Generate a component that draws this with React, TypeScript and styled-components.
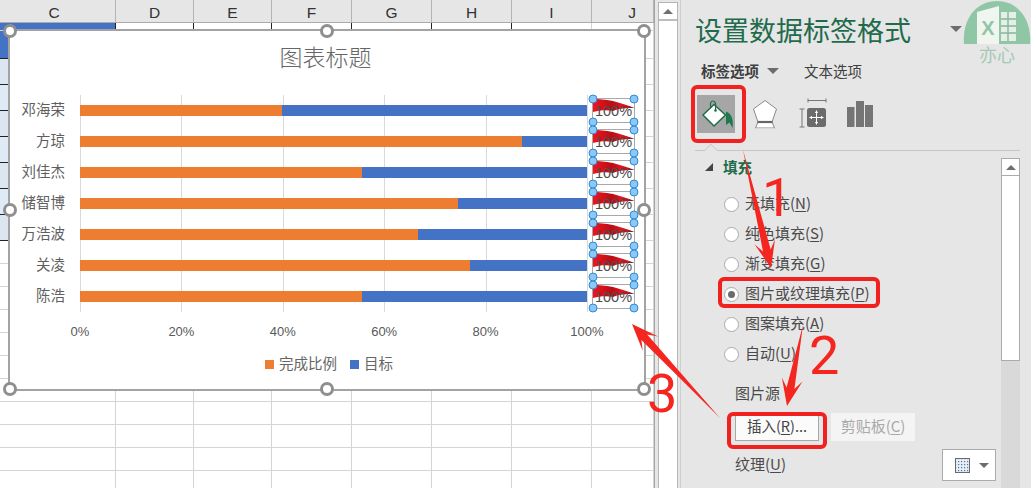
import React from "react";
import styled, { createGlobalStyle } from "styled-components";

const CJK = `"Noto Sans CJK SC", "Liberation Sans", sans-serif`;

const Global = createGlobalStyle`
  html, body { margin: 0; padding: 0; background: #e6e6e6; }
  * { box-sizing: border-box; }
  #root { width: 1031px; height: 488px; overflow: hidden; }
`;

const Window = styled.div`
  position: relative;
  display: flex;
  width: 1031px;
  height: 488px;
  overflow: hidden;
  background: #e6e6e6;
  font-family: ${CJK};
`;

/* ---------- spreadsheet ---------- */
const SheetArea = styled.div`
  position: relative;
  width: 655px;
  height: 488px;
  flex: none;
  overflow: hidden;
  background: #fff;
  border-right: 1px solid #a6a6a6;
`;
const ColumnHeader = styled.div`
  display: grid;
  grid-template-columns: 116px 78px 78px 80px 80px 80px 80px 62px;
  height: 23px;
  background: #e6e6e6;
  border-bottom: 1px solid #ababab;
`;
const ColumnName = styled.div<{ $padLeft?: number; $padRight?: number }>`
  display: flex;
  align-items: center;
  justify-content: center;
  padding-top: 3px;
  padding-left: ${(p) => p.$padLeft ?? 0}px;
  padding-right: ${(p) => p.$padRight ?? 0}px;
  border-right: 1px solid #b4b4b4;
  font: 15.5px "Liberation Sans", sans-serif;
  color: #333;
`;
const CellGrid = styled.div`
  display: grid;
  grid-template-columns: 116px 78px 78px 80px 80px 80px 80px 62px;
  grid-template-rows: 8px 28px repeat(7, 26px) repeat(11, 23px);
`;
const Cell = styled.div<{ $fill: string; $bottom: string; $right: string }>`
  background: ${(p) => p.$fill};
  border-bottom: 1px solid ${(p) => p.$bottom};
  border-right: 1px solid ${(p) => p.$right};
`;

/* ---------- chart ---------- */
const Chart = styled.div`
  position: absolute;
  left: 8px;
  top: 29px;
  width: 638px;
  height: 362px;
  display: flex;
  flex-direction: column;
  background: #fff;
  border: 2px solid #a3a3a3;
  color: #595959;
`;
const ChartTitle = styled.div`
  height: 50px;
  margin-bottom: 14px;
  padding-right: 3px;
  display: flex;
  align-items: center;
  justify-content: center;
  font-size: 23px;
  font-weight: 300;
  color: #666;
`;
const PlotRow = styled.div`
  display: flex;
  height: 31px;
`;
const CategoryName = styled.div`
  width: 55px;
  margin-right: 15px;
  text-align: right;
  font-size: 14.5px;
  line-height: 27px;
  white-space: nowrap;
  color: #5f5f5f;
`;
const Track = styled.div`
  width: 508px;
  display: flex;
  align-items: center;
  background: repeating-linear-gradient(to right, #d9d9d9 0 1px, transparent 1px 101.4px);
`;
const BarPair = styled.div`
  display: flex;
  width: 507px;
  height: 11px;
`;
const OrangeBar = styled.div`
  background: #ed7d31;
`;
const BlueBar = styled.div`
  flex: 1;
  background: #4472c4;
`;
const DataLabel = styled.div`
  position: relative;
  width: 43px;
  height: 25px;
  margin: 3px 0 0 4px;
  display: flex;
  align-items: center;
  justify-content: center;
  border: 1px solid #a9a9a9;
  font: 14.5px "Liberation Sans", sans-serif;
  color: #4d4d4d;
`;
const FlagArt = styled.svg`
  position: absolute;
  left: 0;
  top: -1px;
  width: 42px;
  height: 14px;
`;
const LabelText = styled.span`
  position: relative;
`;
const LabelHandle = styled.i<{ $x: number; $y: number }>`
  position: absolute;
  left: ${(p) => p.$x}%;
  top: ${(p) => p.$y}%;
  width: 9px;
  height: 9px;
  transform: translate(-50%, -50%);
  border-radius: 50%;
  background: #8cc8f5;
  border: 1px solid #2f8ad6;
`;
const AxisRow = styled.div`
  width: 507px;
  height: 38px;
  margin-left: 70px;
  display: flex;
  justify-content: space-between;
  align-items: center;
`;
const AxisTick = styled.div`
  width: 0;
  display: flex;
  justify-content: center;
  white-space: nowrap;
  font: 13px "Liberation Sans", sans-serif;
  color: #595959;
`;
const Legend = styled.div`
  height: 24px;
  padding-left: 4px;
  display: flex;
  align-items: center;
  justify-content: center;
  font-size: 14.5px;
  color: #666;
`;
const LegendItem = styled.div`
  display: flex;
  align-items: center;
  gap: 5px;
  margin: 0 6.5px;
`;
const Swatch = styled.i<{ $color: string }>`
  width: 9px;
  height: 9px;
  margin-top: 4px;
  background: ${(p) => p.$color};
`;
const ChartHandle = styled.i<{ $x: number; $y: number }>`
  position: absolute;
  left: ${(p) => p.$x}%;
  top: ${(p) => p.$y}%;
  width: 14px;
  height: 14px;
  transform: translate(-50%, -50%);
  border-radius: 50%;
  background: #fff;
  border: 3px solid #8f8f8f;
`;

/* ---------- sheet scrollbar ---------- */
const SheetScroll = styled.div`
  width: 20px;
  height: 488px;
  margin: 2px 0 0 3px;
  flex: none;
  background: #fff;
  border-left: 1px solid #b5b5b5;
  border-right: 1px solid #b5b5b5;
`;
const ScrollCap = styled.div`
  height: 19px;
  display: flex;
  align-items: center;
  justify-content: center;
  border-top: 1px solid #b5b5b5;
  border-bottom: 2px solid #bdbdbd;
`;
const ArrowUp = styled.i`
  width: 0;
  height: 0;
  border-left: 5px solid transparent;
  border-right: 5px solid transparent;
  border-bottom: 5px solid #6f6f6f;
`;

/* ---------- format panel ---------- */
const Panel = styled.div`
  position: relative;
  margin-left: 2px;
  flex: 1;
  height: 488px;
  display: flex;
  flex-direction: column;
  border-left: 1px solid #cfcfcf;
  color: #444;
`;
const TitleRow = styled.div`
  height: 60px;
  padding: 0 0 2px 14px;
  display: flex;
  align-items: center;
`;
const PanelTitle = styled.div`
  font-size: 27px;
  color: #1f6b4b;
  white-space: nowrap;
`;
const DownCaret = styled.i<{ $size: number; $left: number }>`
  width: 0;
  height: 0;
  margin-left: ${(p) => p.$left}px;
  border-left: ${(p) => p.$size}px solid transparent;
  border-right: ${(p) => p.$size}px solid transparent;
  border-top: ${(p) => p.$size}px solid #6c6c6c;
`;
const TabRow = styled.div`
  height: 23px;
  padding: 0 0 2px 20px;
  display: flex;
  align-items: center;
`;
const Tab = styled.span<{ $active?: boolean }>`
  font-size: 14.5px;
  font-weight: ${(p) => (p.$active ? 700 : 400)};
  color: #3f3f3f;
  white-space: nowrap;
`;
const TabGap = styled.span`
  width: 25px;
`;
const IconRow = styled.div`
  height: 38px;
  margin-top: 12px;
  padding-left: 16px;
  display: flex;
  align-items: center;
`;
const IconBox = styled.div<{ $active?: boolean; $width: number; $left: number }>`
  width: ${(p) => p.$width}px;
  height: 38px;
  margin-left: ${(p) => p.$left}px;
  background: ${(p) => (p.$active ? "#a6a6a6" : "transparent")};
  flex: none;
`;
const Divider = styled.div`
  position: relative;
  height: 1px;
  margin: 17px 11px 0 14px;
  background: #c6c6c6;
`;
const DividerNotch = styled.i`
  position: absolute;
  left: 10px;
  top: -6px;
  width: 12px;
  height: 12px;
  transform: rotate(45deg) scale(0.75);
  background: #e6e6e6;
  border-left: 1px solid #c6c6c6;
  border-top: 1px solid #c6c6c6;
`;
const PanelBody = styled.div`
  flex: 1;
  min-height: 0;
  margin-top: 7px;
  display: flex;
`;
const Options = styled.div`
  flex: 1;
  padding-right: 5px;
`;
const SectionHead = styled.div`
  height: 18px;
  padding-left: 24px;
  display: flex;
  align-items: center;
  gap: 10px;
  font-size: 14.5px;
  font-weight: 700;
  color: #1f6b4b;
`;
const SectionName = styled.span`
  margin-bottom: 2px;
`;
const Collapse = styled.i`
  width: 0;
  height: 0;
  border-bottom: 8px solid #444;
  border-left: 8px solid transparent;
`;
const RadioList = styled.div`
  margin-top: 13px;
  padding-left: 43px;
`;
const RadioRow = styled.div`
  height: 30px;
  display: flex;
  align-items: center;
  gap: 6px;
  font-size: 15px;
  color: #4a4a4a;
  white-space: nowrap;
`;
const RadioDot = styled.i<{ $on?: boolean }>`
  width: 15px;
  height: 15px;
  flex: none;
  display: flex;
  align-items: center;
  justify-content: center;
  border-radius: 50%;
  background: #fff;
  border: 1px solid #ababab;
  &::after {
    content: "";
    width: 7px;
    height: 7px;
    border-radius: 50%;
    background: ${(p) => (p.$on ? "#6b6b6b" : "transparent")};
  }
`;
const FieldLabel = styled.div`
  height: 24px;
  margin-top: 13px;
  padding: 0 0 4px 54px;
  display: flex;
  align-items: center;
  font-size: 15px;
  color: #4a4a4a;
`;
const ButtonRow = styled.div`
  margin-top: 7px;
  padding-left: 54px;
  display: flex;
  gap: 12px;
`;
const ActionButton = styled.div<{ $disabled?: boolean }>`
  width: 84px;
  height: 28px;
  display: flex;
  align-items: center;
  justify-content: center;
  font-size: ${(p) => (p.$disabled ? 15 : 14.5)}px;
  white-space: nowrap;
  color: ${(p) => (p.$disabled ? "#a9a9a9" : "#444")};
  background: ${(p) => (p.$disabled ? "#f4f4f4" : "#fbfbfb")};
  border: 1px solid ${(p) => (p.$disabled ? "#f4f4f4" : "#a8a8a8")};
`;
const TextureRow = styled.div`
  height: 32px;
  margin-top: 8px;
  padding-left: 54px;
  display: flex;
  align-items: center;
  justify-content: space-between;
  font-size: 15px;
  color: #4a4a4a;
`;
const TextureSelect = styled.div`
  width: 54px;
  height: 32px;
  display: flex;
  align-items: center;
  padding-left: 12px;
  gap: 9px;
  background: #fff;
  border: 1px solid #ababab;
`;
const PanelScroll = styled.div`
  width: 19px;
  margin-right: 11px;
  flex: none;
  display: flex;
  flex-direction: column;
  background: #d9d9d9;
`;
const PanelScrollCap = styled.div`
  height: 18px;
  display: flex;
  align-items: center;
  justify-content: center;
  background: #fff;
  border: 1px solid #ababab;
`;
const PanelScrollThumb = styled.div`
  height: 185px;
  background: #fff;
  border: 1px solid #ababab;
  border-top: 0;
`;
const Watermark = styled.div`
  position: absolute;
  left: 282px;
  top: 0;
  width: 68px;
  display: flex;
  flex-direction: column;
  align-items: center;
`;
const WatermarkText = styled.span`
  margin-top: -1px;
  font-size: 18px;
  line-height: 22px;
  color: #a5c9b5;
`;

/* ---------- red annotations ---------- */
const Callout = styled.div<{ $x: number; $y: number; $w: number; $h: number }>`
  position: absolute;
  left: ${(p) => p.$x}px;
  top: ${(p) => p.$y}px;
  width: ${(p) => p.$w}px;
  height: ${(p) => p.$h}px;
  border: 4px solid #f0211f;
  border-radius: 6px;
`;
const StepNumber = styled.span<{ $x: number; $y: number }>`
  position: absolute;
  left: ${(p) => p.$x}px;
  top: ${(p) => p.$y}px;
  font: 400 54px/54px Roboto, "Liberation Sans", sans-serif;
  color: #f5261f;
`;
const ArrowLayer = styled.svg`
  position: absolute;
  left: 0;
  top: 0;
  width: 1031px;
  height: 488px;
  pointer-events: none;
`;

/* ---------- data ---------- */
const people: [string, number][] = [
  ["邓海荣", 39.9],
  ["方琼", 87.2],
  ["刘佳杰", 55.6],
  ["储智博", 74.6],
  ["万浩波", 66.7],
  ["关凌", 77],
  ["陈浩", 55.6],
];
const columns = ["C", "D", "E", "F", "G", "H", "I", "J"];
const rowCount = 20;

function arrowPoints(x1: number, y1: number, x2: number, y2: number) {
  const dx = x2 - x1;
  const dy = y2 - y1;
  const len = Math.hypot(dx, dy);
  const ux = dx / len;
  const uy = dy / len;
  const at = (back: number, side: number) =>
    `${(x2 - ux * back - uy * side).toFixed(1)},${(y2 - uy * back + ux * side).toFixed(1)}`;
  return [`${x1},${y1}`, at(18, 4), at(27, 10.5), `${x2},${y2}`, at(27, -10.5), at(18, -4)].join(" ");
}

function cellFill(row: number, col: number) {
  if (col !== 0) return "#fff";
  if (row < 2) return "#4472c4";
  if (row < 9) return row % 2 ? "#deeaf6" : "#dce6f1";
  return "#fff";
}

const Flag = () => (
  <FlagArt viewBox="0 0 42 14">
    <defs>
      <linearGradient id="flagFill" x1="0" x2="1" y1="0" y2="0">
        <stop offset="0" stopColor="#f0141f" />
        <stop offset="0.45" stopColor="#b80e16" />
        <stop offset="0.7" stopColor="#e0161e" />
        <stop offset="1" stopColor="#8c0c12" />
      </linearGradient>
    </defs>
    <path d="M0 0C6 2 12 1 20 3C28 5 36 8 41.500 10C33 10 27 10 20 13C14 11.500 7 12 0 14Z" fill="url(#flagFill)" />
  </FlagArt>
);

const BucketIcon = () => (
  <svg width="38" height="38" viewBox="0 0 38 38">
    <path d="M29 16.5C34 18 37 24 35.5 33L32.5 27.5L29 30Z" fill="#1d7a4e" />
    <path d="M17 9.5L28.5 20L17 31L6 20Z" fill="#fff" stroke="#1d6e48" strokeWidth="1.5" />
    <path d="M14 13C12.5 8 14 6 16 6C18.5 6 19 9 18.5 15" fill="none" stroke="#1d6e48" strokeWidth="1.2" />
    <circle cx="18.5" cy="15.5" r="1.3" fill="#1d6e48" />
  </svg>
);
const PentagonIcon = () => (
  <svg width="26" height="38" viewBox="0 0 26 38">
    <path d="M13 5.5L24.5 14L20 27L22.5 33H3.5L6 27L1.5 14Z" fill="#fff" stroke="#8a8a8a" strokeWidth="1" />
    <path d="M5.5 27H20.5" stroke="#666" strokeWidth="2.2" />
    <path d="M3.8 33.5H22.2" stroke="#d8d8d8" strokeWidth="1" />
  </svg>
);
const SizeIcon = () => (
  <svg width="28" height="38" viewBox="0 0 28 38">
    <path d="M9 5.5H27M9 3.5V7.5M27 3.5V7.5" stroke="#777" strokeWidth="1" fill="none" />
    <path d="M3 14V32M0.5 14H5.5M0.5 32H5.5" stroke="#777" strokeWidth="1" fill="none" />
    <rect x="8" y="13" width="19" height="19" rx="2.5" fill="#6b6b6b" />
    <path d="M10.5 22.5H24.5M17.5 15.5V29.5" stroke="#fff" strokeWidth="1" />
    <path d="M10.5 22.5L13 20.8V24.2ZM24.5 22.5L22 20.8V24.2ZM17.5 15.5L15.8 18H19.2ZM17.5 29.5L15.8 27H19.2Z" fill="#fff" />
  </svg>
);
const BarsIcon = () => (
  <svg width="27" height="38" viewBox="0 0 27 38">
    <rect x="0" y="12" width="7.5" height="20" fill="#757575" />
    <rect x="9" y="6" width="8" height="26" fill="#757575" />
    <rect x="18" y="10" width="8" height="22" fill="#757575" />
  </svg>
);
const TextureIcon = () => (
  <svg width="15" height="15" viewBox="0 0 15 15">
    <defs>
      <pattern id="dots" width="3" height="3" patternUnits="userSpaceOnUse">
        <rect width="3" height="3" fill="#e8eef6" />
        <rect width="1.2" height="1.2" fill="#4a76a8" />
      </pattern>
    </defs>
    <rect x="0.5" y="0.5" width="14" height="14" fill="url(#dots)" stroke="#6a6a6a" />
  </svg>
);
const WatermarkLogo = () => (
  <svg width="68" height="44" viewBox="0 0 68 44">
    <path d="M1 44C-1 18 14 1 34 1C54 1 69 18 67 44Z" fill="#8fc7a6" />
    <path d="M14 12L36 6V44H14Z" fill="#f0f5f0" />
    <path d="M38 12H53V41H38Z" fill="#e4efe6" />
    <path d="M38 19H53M38 26H53M38 33H53M45 12V41" stroke="#86b79a" strokeWidth="1.4" />
    <text x="25" y="35" textAnchor="middle" fontFamily="Liberation Sans, sans-serif" fontWeight="700" fontSize="20" fill="#8fc7a6">
      X
    </text>
  </svg>
);

const Under = styled.u`
  text-underline-offset: 2px;
`;
const HotLabel = styled.span`
  margin-bottom: 4px;
`;
const Hotkey = ({ text, k, tail = "" }: { text: string; k: string; tail?: string }) => (
  <HotLabel>
    {text}(<Under>{k}</Under>){tail}
  </HotLabel>
);

export default function App() {
  return (
    <Window>
      <Global />
      <SheetArea>
        <ColumnHeader>
          {columns.map((c, i) => (
            <ColumnName key={c} $padRight={i === 0 ? 7 : 0} $padLeft={i === 7 ? 19 : 0}>
              {c}
            </ColumnName>
          ))}
        </ColumnHeader>
        <CellGrid>
          {Array.from({ length: rowCount }).flatMap((_, r) =>
            columns.map((c, i) => (
              <Cell
                key={`${r}-${c}`}
                $fill={cellFill(r, i)}
                $bottom={i === 0 && r >= 1 && r < 9 ? "#222" : "#d4d4d4"}
                $right={r === 0 && i < 6 ? "#222" : "#d4d4d4"}
              />
            ))
          )}
        </CellGrid>
        <Chart>
          <ChartTitle>图表标题</ChartTitle>
          {people.map(([name, value]) => (
            <PlotRow key={name}>
              <CategoryName>{name}</CategoryName>
              <Track>
                <BarPair>
                  <OrangeBar style={{ width: `${value}%` }} />
                  <BlueBar />
                </BarPair>
              </Track>
              <DataLabel>
                <Flag />
                <LabelText>100%</LabelText>
                <LabelHandle $x={0} $y={0} />
                <LabelHandle $x={100} $y={0} />
                <LabelHandle $x={0} $y={100} />
                <LabelHandle $x={100} $y={100} />
              </DataLabel>
            </PlotRow>
          ))}
          <AxisRow>
            {["0%", "20%", "40%", "60%", "80%", "100%"].map((t) => (
              <AxisTick key={t}>{t}</AxisTick>
            ))}
          </AxisRow>
          <Legend>
            <LegendItem>
              <Swatch $color="#ed7d31" />
              完成比例
            </LegendItem>
            <LegendItem>
              <Swatch $color="#4472c4" />
              目标
            </LegendItem>
          </Legend>
          {[
            [0, 0],
            [50, 0],
            [100, 0],
            [0, 50],
            [100, 50],
            [0, 100],
            [50, 100],
            [100, 100],
          ].map(([x, y]) => (
            <ChartHandle key={`${x}-${y}`} $x={x} $y={y} />
          ))}
        </Chart>
      </SheetArea>
      <SheetScroll>
        <ScrollCap>
          <ArrowUp />
        </ScrollCap>
      </SheetScroll>
      <Panel>
        <TitleRow>
          <PanelTitle>设置数据标签格式</PanelTitle>
          <DownCaret $size={6} $left={39} />
        </TitleRow>
        <TabRow>
          <Tab $active>标签选项</Tab>
          <DownCaret $size={6} $left={8} />
          <TabGap />
          <Tab>文本选项</Tab>
        </TabRow>
        <IconRow>
          <IconBox $active $width={38} $left={0}>
            <BucketIcon />
          </IconBox>
          <IconBox $width={26} $left={17}>
            <PentagonIcon />
          </IconBox>
          <IconBox $width={28} $left={21}>
            <SizeIcon />
          </IconBox>
          <IconBox $width={27} $left={20}>
            <BarsIcon />
          </IconBox>
        </IconRow>
        <Divider>
          <DividerNotch />
        </Divider>
        <PanelBody>
          <Options>
            <SectionHead>
              <Collapse />
              <SectionName>填充</SectionName>
            </SectionHead>
            <RadioList>
              <RadioRow>
                <RadioDot />
                <Hotkey text="无填充" k="N" />
              </RadioRow>
              <RadioRow>
                <RadioDot />
                <Hotkey text="纯色填充" k="S" />
              </RadioRow>
              <RadioRow>
                <RadioDot />
                <Hotkey text="渐变填充" k="G" />
              </RadioRow>
              <RadioRow>
                <RadioDot $on />
                <Hotkey text="图片或纹理填充" k="P" />
              </RadioRow>
              <RadioRow>
                <RadioDot />
                <Hotkey text="图案填充" k="A" />
              </RadioRow>
              <RadioRow>
                <RadioDot />
                <Hotkey text="自动" k="U" />
              </RadioRow>
            </RadioList>
            <FieldLabel>图片源</FieldLabel>
            <ButtonRow>
              <ActionButton>
                <Hotkey text="插入" k="R" tail="..." />
              </ActionButton>
              <ActionButton $disabled>
                <Hotkey text="剪贴板" k="C" />
              </ActionButton>
            </ButtonRow>
            <TextureRow>
              <Hotkey text="纹理" k="U" />
              <TextureSelect>
                <TextureIcon />
                <DownCaret $size={5} $left={0} />
              </TextureSelect>
            </TextureRow>
          </Options>
          <PanelScroll>
            <PanelScrollCap>
              <ArrowUp />
            </PanelScrollCap>
            <PanelScrollThumb />
          </PanelScroll>
        </PanelBody>
        <Watermark>
          <WatermarkLogo />
          <WatermarkText>亦心</WatermarkText>
        </Watermark>
      </Panel>
      <Callout $x={691} $y={85} $w={55} $h={58} />
      <Callout $x={718} $y={277} $w={162} $h={31} />
      <Callout $x={727} $y={412} $w={100} $h={37} />
      <ArrowLayer viewBox="0 0 1031 488">
        <polygon points={arrowPoints(743, 150, 771, 268)} fill="#f5261f" />
        <polygon points={arrowPoints(803, 325, 787, 406)} fill="#f5261f" />
        <polygon points={arrowPoints(720, 418, 632, 324)} fill="#f5261f" />
      </ArrowLayer>
      <StepNumber $x={762} $y={171}>1</StepNumber>
      <StepNumber $x={809} $y={329}>2</StepNumber>
      <StepNumber $x={647} $y={367}>3</StepNumber>
    </Window>
  );
}
